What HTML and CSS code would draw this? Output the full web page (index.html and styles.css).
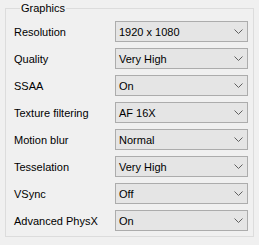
FILE: index.html
```html
<!DOCTYPE html>
<html lang="en">
<head>
  <meta charset="UTF-8">
  <title>Graphics</title>
  <link rel="stylesheet" href="styles.css">
</head>
<body>
  <fieldset class="group">
    <legend>Graphics</legend>
    <div class="rows">
      <label>Resolution</label>
      <div class="combo"><span>1920 x 1080</span><svg width="9" height="5"><polyline points="0.5,0.5 4.5,4.5 8.5,0.5"/></svg></div>

      <label>Quality</label>
      <div class="combo"><span>Very High</span><svg width="9" height="5"><polyline points="0.5,0.5 4.5,4.5 8.5,0.5"/></svg></div>

      <label>SSAA</label>
      <div class="combo"><span>On</span><svg width="9" height="5"><polyline points="0.5,0.5 4.5,4.5 8.5,0.5"/></svg></div>

      <label>Texture filtering</label>
      <div class="combo"><span>AF 16X</span><svg width="9" height="5"><polyline points="0.5,0.5 4.5,4.5 8.5,0.5"/></svg></div>

      <label>Motion blur</label>
      <div class="combo"><span>Normal</span><svg width="9" height="5"><polyline points="0.5,0.5 4.5,4.5 8.5,0.5"/></svg></div>

      <label>Tesselation</label>
      <div class="combo"><span>Very High</span><svg width="9" height="5"><polyline points="0.5,0.5 4.5,4.5 8.5,0.5"/></svg></div>

      <label>VSync</label>
      <div class="combo"><span>Off</span><svg width="9" height="5"><polyline points="0.5,0.5 4.5,4.5 8.5,0.5"/></svg></div>

      <label>Advanced PhysX</label>
      <div class="combo"><span>On</span><svg width="9" height="5"><polyline points="0.5,0.5 4.5,4.5 8.5,0.5"/></svg></div>
    </div>
  </fieldset>
</body>
</html>
```

FILE: styles.css
```css
* {
  margin: 0;
  padding: 0;
  box-sizing: border-box;
}

body {
  font-family: "Liberation Sans", Arial, sans-serif;
  font-size: 11px;
  color: #000;
  background-color: #f0f0f0;
  padding-top: 2px;
}

.group {
  margin: 0 5px;
  height: 235px;
  border: 1px solid #dcdcdc;
  padding: 7px 5px 0 8px;
}

.group legend {
  margin-left: 6px;
  padding: 0 1px;
  line-height: 12px;
}

.rows {
  display: grid;
  grid-template-columns: 101px 133px;
  grid-auto-rows: 21px;
  row-gap: 6px;
  align-items: center;
}

.combo {
  display: flex;
  align-items: center;
  justify-content: space-between;
  height: 21px;
  padding: 0 4px 0 3px;
  background-color: #e5e5e5;
  border: 1px solid #acacac;
}

.combo svg {
  fill: none;
  stroke: #606060;
  stroke-width: 1;
}
```
